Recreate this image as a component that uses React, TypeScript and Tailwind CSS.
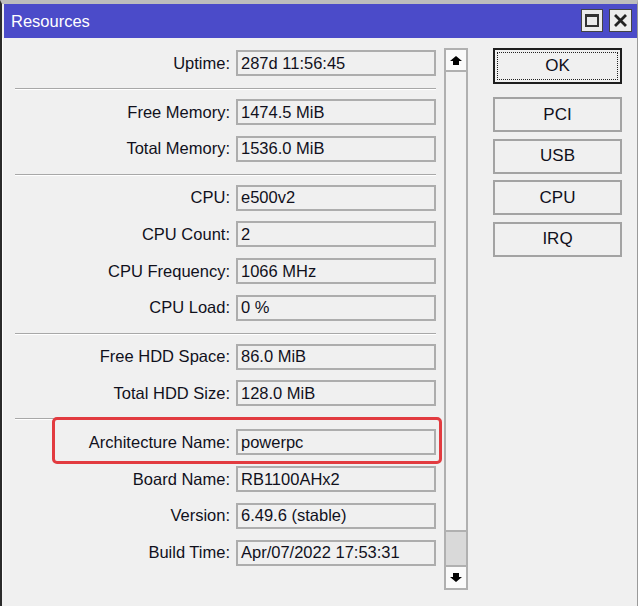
import React from 'react';

type Row = { label: string; value: string };

const groups: Row[][] = [
  [{ label: 'Uptime:', value: '287d 11:56:45' }],
  [
    { label: 'Free Memory:', value: '1474.5 MiB' },
    { label: 'Total Memory:', value: '1536.0 MiB' },
  ],
  [
    { label: 'CPU:', value: 'e500v2' },
    { label: 'CPU Count:', value: '2' },
    { label: 'CPU Frequency:', value: '1066 MHz' },
    { label: 'CPU Load:', value: '0 %' },
  ],
  [
    { label: 'Free HDD Space:', value: '86.0 MiB' },
    { label: 'Total HDD Size:', value: '128.0 MiB' },
  ],
  [
    { label: 'Architecture Name:', value: 'powerpc' },
    { label: 'Board Name:', value: 'RB1100AHx2' },
    { label: 'Version:', value: '6.49.6 (stable)' },
    { label: 'Build Time:', value: 'Apr/07/2022 17:53:31' },
  ],
];

function Field({ label, value }: Row) {
  return (
    <div className="flex items-center h-[26px]">
      <div className="w-[227px] text-right whitespace-nowrap">{label}</div>
      <div className="ml-[6px] w-[200px] h-[26px] border-2 border-[#adadad] bg-[#f0f0f0] flex items-center pl-[3px] whitespace-nowrap">
        {value}
      </div>
    </div>
  );
}

function Arrow({ down }: { down?: boolean }) {
  return (
    <svg width="12" height="9" viewBox="0 0 12 9" className={down ? 'rotate-180' : ''}>
      <polygon points="6,0 12,5 9,5 9,9 3,9 3,5 0,5" fill="#000" />
    </svg>
  );
}

function SideButton({ children }: { children: React.ReactNode }) {
  return (
    <div className="h-[35px] border-2 border-[#a3a3a3] bg-[#f0f0f0] flex items-center justify-center">
      {children}
    </div>
  );
}

export default function App() {
  return (
    <div
      className="relative w-[638px] h-[606px] overflow-hidden bg-[#f0f0f0] border-l-2 border-l-[#2b2b2b] border-t-4 border-t-[#bdbdbd] border-r border-r-[#9a9a9a] text-[16.5px] text-[#10101c]"
      style={{ fontFamily: '"Liberation Sans", Arial, sans-serif' }}
    >
      {/* title bar */}
      <div className="h-[34px] ml-[2px] bg-[#4b4bc9] flex items-center justify-between pl-[7px] pr-[5px]">
        <span className="text-white text-[16.5px]">Resources</span>
        <div className="flex gap-[6px] -mt-[2px]">
          <div className="w-[22px] h-[23px] bg-[#ececec] border border-[#444] flex items-center justify-center">
            <div className="w-[14px] h-[13px] border-2 border-t-[3px] border-[#333]" />
          </div>
          <div className="w-[23px] h-[23px] bg-[#ececec] border border-[#444] flex items-center justify-center">
            <svg width="13" height="13" viewBox="0 0 13 13">
              <path d="M2 2 L11 11 M11 2 L2 11" stroke="#222" strokeWidth="2.8" strokeLinecap="square" />
            </svg>
          </div>
        </div>
      </div>

      {/* body */}
      <div className="flex pt-[10px] border-l border-white">
        <div className="w-[433px] flex flex-col pt-[2px]">
          {groups.map((g, gi) => (
            <div key={gi} className="flex flex-col">
              {gi > 0 && (
                <div className="ml-[12px] mt-[12px] mb-[9px] h-[2px] border-t border-[#a8a8a8] border-b border-b-white" />
              )}
              <div className="flex flex-col gap-[10.7px]">
                {g.map((r) => (
                  <Field key={r.label} {...r} />
                ))}
              </div>
            </div>
          ))}
        </div>

        {/* scrollbar */}
        <div className="ml-[8px] w-[24px] h-[542px] border-2 border-[#b0b0b0] flex flex-col bg-[#f2f2f2]">
          <div className="h-[22px] border-b-2 border-[#b0b0b0] bg-[#fafafa] flex items-center justify-center">
            <Arrow />
          </div>
          <div className="flex-1" />
          <div className="h-[35px] border-t-2 border-[#b0b0b0] bg-[#d9d9d9]" />
          <div className="h-[23px] border-t-2 border-[#b0b0b0] bg-[#fafafa] flex items-center justify-center">
            <Arrow down />
          </div>
        </div>

        {/* buttons */}
        <div className="ml-[25px] w-[129px] flex flex-col">
          <div className="h-[36px] border-2 border-[#1e1e1e] p-[2px] bg-[#f0f0f0]">
            <div className="h-full border border-dotted border-[#222] flex items-center justify-center text-[17px]">
              OK
            </div>
          </div>
          <div className="mt-[13px] flex flex-col gap-[6.5px] text-[17px]">
            <SideButton>PCI</SideButton>
            <SideButton>USB</SideButton>
            <SideButton>CPU</SideButton>
            <SideButton>IRQ</SideButton>
          </div>
        </div>
      </div>

      {/* highlight */}
      <div className="absolute left-[50px] top-[413px] w-[390px] h-[47px] border-[3px] border-[#e23b40] rounded-[5px] pointer-events-none" />
    </div>
  );
}
